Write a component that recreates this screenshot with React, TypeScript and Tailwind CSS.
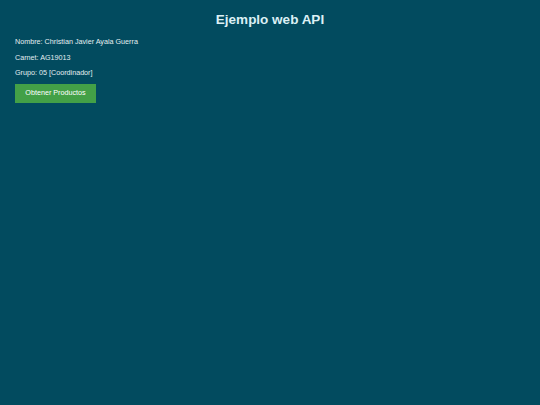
export default function App() {
  return (
    <div className="min-h-screen w-full bg-[#024b5f] text-[#e4eef1] font-['Liberation_Sans',Arial,sans-serif]">
      <div className="px-[15px] pt-[11px]">
        <h1 className="text-center text-[13.5px] leading-[18px] font-bold text-[#dcf0f5]">
          Ejemplo web API
        </h1>
        <div className="mt-[8px] flex flex-col gap-[6.5px] text-[7.2px] leading-[9px]">
          <p>Nombre: Christian Javier Ayala Guerra</p>
          <p>Carnet: AG19013</p>
          <p>Grupo: 05 [Coordinador]</p>
        </div>
        <button className="mt-[7px] h-[19px] w-[81px] bg-[#43a047] text-[7.2px] text-white">
          Obtener Productos
        </button>
      </div>
    </div>
  );
}
